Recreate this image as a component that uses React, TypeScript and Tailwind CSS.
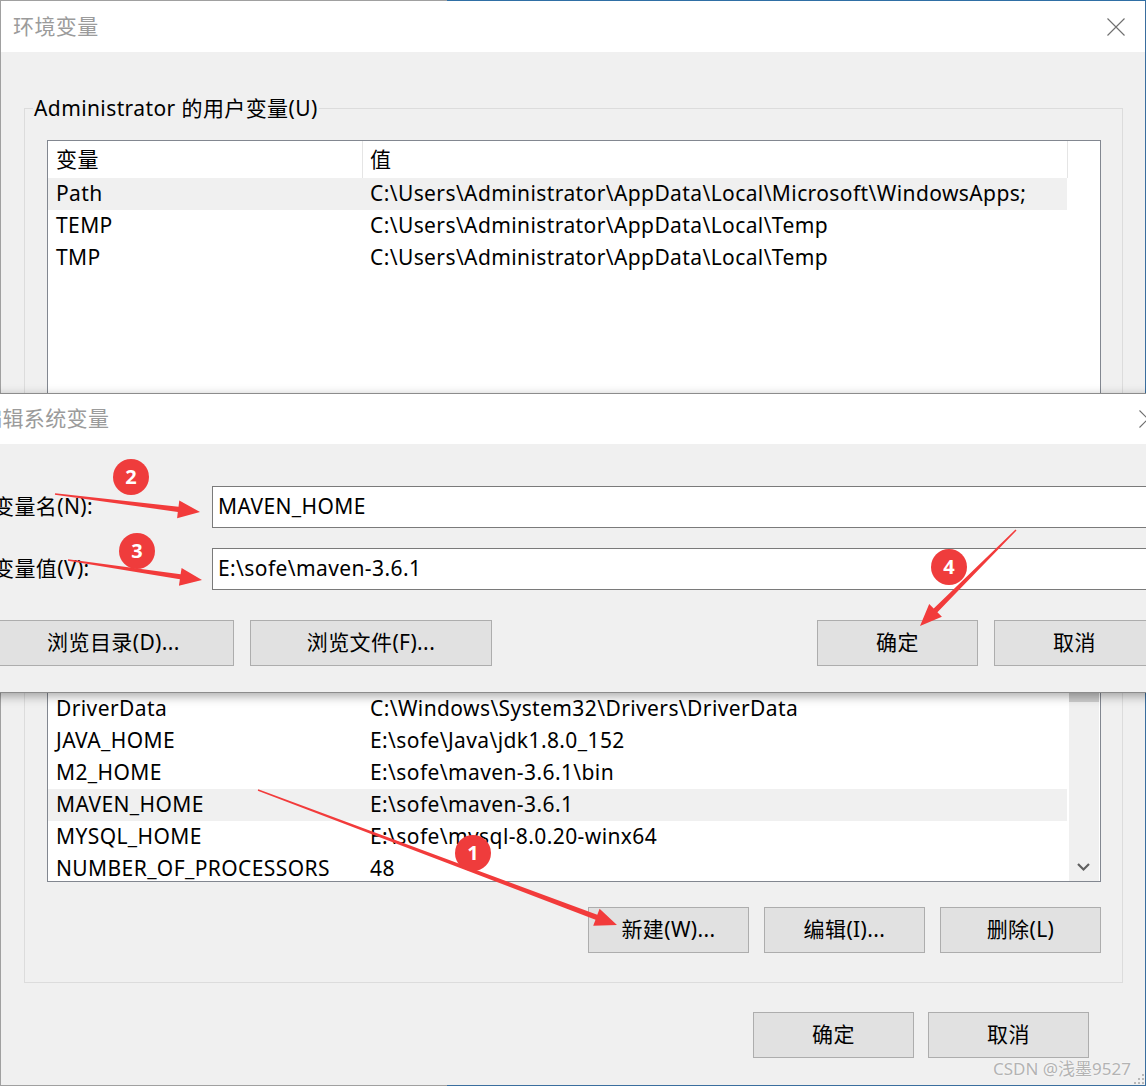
import React from 'react';

type Pt = [number, number];

const userVars: [string, string][] = [
  ['Path', 'C:\\Users\\Administrator\\AppData\\Local\\Microsoft\\WindowsApps;'],
  ['TEMP', 'C:\\Users\\Administrator\\AppData\\Local\\Temp'],
  ['TMP', 'C:\\Users\\Administrator\\AppData\\Local\\Temp'],
];

const sysVars: [string, string][] = [
  ['ComSpec', 'C:\\Windows\\system32\\cmd.exe'],
  ['DriverData', 'C:\\Windows\\System32\\Drivers\\DriverData'],
  ['JAVA_HOME', 'E:\\sofe\\Java\\jdk1.8.0_152'],
  ['M2_HOME', 'E:\\sofe\\maven-3.6.1\\bin'],
  ['MAVEN_HOME', 'E:\\sofe\\maven-3.6.1'],
  ['MYSQL_HOME', 'E:\\sofe\\mysql-8.0.20-winx64'],
  ['NUMBER_OF_PROCESSORS', '48'],
];

// tapered shaft + filled head, like the screenshot markup tool draws
function arrowPoints(from: Pt, to: Pt, head = 22, half = 9) {
  const [x1, y1] = from;
  const [x2, y2] = to;
  const len = Math.hypot(x2 - x1, y2 - y1);
  const ux = (x2 - x1) / len;
  const uy = (y2 - y1) / len;
  const nx = -uy;
  const ny = ux;
  const bx = x2 - ux * head;
  const by = y2 - uy * head;
  const pts: Pt[] = [
    [x1 + nx * 0.7, y1 + ny * 0.7],
    [bx + nx * 2.6, by + ny * 2.6],
    [bx + nx * half, by + ny * half],
    [x2, y2],
    [bx - nx * half, by - ny * half],
    [bx - nx * 2.6, by - ny * 2.6],
    [x1 - nx * 0.7, y1 - ny * 0.7],
  ];
  return pts.map((p) => p.map((v) => v.toFixed(1)).join(',')).join(' ');
}

const arrows: [Pt, Pt][] = [
  [[55, 494], [200, 512]],
  [[68, 560], [202, 580]],
  [[1016, 530], [920, 626]],
  [[258, 790], [617, 925]],
];

const CloseX = () => (
  <svg width="18" height="18" viewBox="0 0 18 18" className="shrink-0">
    <path d="M0.5 0.5 L17.5 17.5 M17.5 0.5 L0.5 17.5" stroke="#6f6f6f" strokeWidth="1.1" fill="none" />
  </svg>
);

const Button = ({label, className = 'w-[161px]'}: {label: string; className?: string}) => (
  <div className={`flex h-[46px] shrink-0 items-center justify-center border border-[#adadad] bg-[#e1e1e1] text-[21px] ${className}`}>
    {label}
  </div>
);

const Row = ({name, value, selected}: {name: string; value: string; selected?: boolean}) => (
  <div className={`flex h-[32px] w-[1019px] shrink-0 items-center whitespace-nowrap text-[21px] ${selected ? 'bg-[#f0f0f0]' : ''}`}>
    <span className="w-[315px] pl-[8px]">{name}</span>
    <span className="pl-[7px]">{value}</span>
  </div>
);

const Badge = ({n, className}: {n: string; className: string}) => (
  <div className={`absolute flex h-[36px] w-[36px] items-center justify-center rounded-full bg-[#ef3c3c] text-[20px] font-bold tracking-normal text-white ${className}`}>
    {n}
  </div>
);

export default function App() {
  return (
    <div className="relative h-[1086px] w-[1146px] overflow-hidden bg-white font-['Noto_Sans','Noto_Sans_CJK_SC',sans-serif] tracking-[0.4px] text-black">
      {/* 环境变量 window */}
      <div className="flex h-full flex-col border border-[#a0a0a0] border-r-[#3a6e9e] bg-[#f0f0f0]">
        <div className="flex h-[51px] shrink-0 items-center justify-between bg-white pl-[12px] pr-[20px]">
          <span className="text-[21px] text-[#9b9b9b]">环境变量</span>
          <CloseX />
        </div>

        <fieldset className="ml-[23px] mt-[42px] w-[1099px] border border-[#dcdcdc] pb-[29px] pl-[22px] pr-[21px] pt-[18px]">
          <legend className="-ml-[14px] px-[1px] text-[21px] leading-[28px]">Administrator 的用户变量(U)</legend>

          <div className="flex h-[300px] flex-col overflow-hidden border border-[#828790] bg-white">
            <div className="flex h-[37px] shrink-0 items-center text-[21px]">
              <span className="flex h-full w-[315px] items-center border-r border-[#e5e5e5] pl-[8px]">变量</span>
              <span className="flex h-full w-[705px] items-center border-r border-[#e5e5e5] pl-[7px]">值</span>
            </div>
            {userVars.map(([n, v], i) => (
              <Row key={n} name={n} value={v} selected={i === 0} />
            ))}
          </div>

          <div className="mt-[220px] flex h-[222px] overflow-hidden border border-[#828790] bg-white">
            <div className="flex w-[1019px] flex-col">
              {sysVars.map(([n, v]) => (
                <Row key={n} name={n} value={v} selected={n === 'MAVEN_HOME'} />
              ))}
            </div>
            <div className="ml-[2px] flex w-[30px] flex-col justify-between bg-[#f0f0f0]">
              <div className="mt-[8px] h-[33px] bg-[#cdcdcd]" />
              <svg width="30" height="20" viewBox="0 0 30 20" className="mb-[4px]">
                <path d="M9 7 L14.5 12.5 L20 7" stroke="#606060" strokeWidth="2.2" fill="none" />
              </svg>
            </div>
          </div>

          <div className="mt-[25px] flex justify-end gap-[15px]">
            <Button label="新建(W)..." />
            <Button label="编辑(I)..." />
            <Button label="删除(L)" />
          </div>
        </fieldset>

        <div className="mt-[29px] flex justify-end gap-[14px] pr-[56px]">
          <Button label="确定" />
          <Button label="取消" />
        </div>
      </div>
      <div className="absolute left-[447px] top-0 h-px w-[699px] bg-[#2f6fa5]" />
      <div className="absolute bottom-0 left-[447px] h-px w-[699px] bg-[#3a6e9e]" />

      {/* 编辑系统变量 dialog, pushed partly off-screen */}
      <div className="absolute left-[-31px] top-[393px] z-10 w-[1210px] border border-[#8c8c8c] bg-[#f0f0f0] shadow-[0_3px_10px_rgba(0,0,0,0.35)]">
        <div className="flex h-[50px] items-center justify-between bg-white pl-[11px] pr-[21px]">
          <span className="text-[21px] text-[#9b9b9b]">编辑系统变量</span>
          <CloseX />
        </div>
        <div className="flex flex-col gap-[20px] pb-[26px] pl-[23px] pr-[23px] pt-[42px]">
          <div className="flex items-center">
            <span className="w-[219px] shrink-0 text-[21px]">变量名(N):</span>
            <div className="flex h-[42px] flex-1 items-center border border-[#7a7a7a] bg-white pl-[5px] text-[21px]">MAVEN_HOME</div>
          </div>
          <div className="flex items-center">
            <span className="w-[219px] shrink-0 text-[21px]">变量值(V):</span>
            <div className="flex h-[42px] flex-1 items-center border border-[#7a7a7a] bg-white pl-[5px] text-[21px]">E:\sofe\maven-3.6.1</div>
          </div>
          <div className="mt-[10px] flex items-center justify-between">
            <div className="flex gap-[16px]">
              <Button label="浏览目录(D)..." className="w-[241px]" />
              <Button label="浏览文件(F)..." className="w-[242px]" />
            </div>
            <div className="flex gap-[16px]">
              <Button label="确定" />
              <Button label="取消" />
            </div>
          </div>
        </div>
      </div>

      {/* red markup */}
      <svg className="pointer-events-none absolute left-0 top-0 z-20" width="1146" height="1086">
        {arrows.map(([a, b], i) => (
          <polygon key={i} points={arrowPoints(a, b)} fill="#f23b3b" />
        ))}
      </svg>
      <Badge n="2" className="left-[113px] top-[459px] z-30" />
      <Badge n="3" className="left-[119px] top-[533px] z-30" />
      <Badge n="4" className="left-[931px] top-[549px] z-30" />
      <Badge n="1" className="left-[455px] top-[835px] z-30" />

      <div className="absolute bottom-[5px] right-[15px] z-30 text-[17px] tracking-normal text-[#b3b3b3] [text-shadow:0_0_2px_#fff]">
        CSDN @浅墨9527
      </div>
      <div className="absolute bottom-[2px] right-[2px] z-30 grid grid-cols-3 gap-[2px]">
        <span className="h-[2px] w-[2px]" />
        <span className="h-[2px] w-[2px]" />
        <span className="h-[2px] w-[2px] bg-[#b8b8b8]" />
        <span className="h-[2px] w-[2px]" />
        <span className="h-[2px] w-[2px] bg-[#b8b8b8]" />
        <span className="h-[2px] w-[2px] bg-[#b8b8b8]" />
        <span className="h-[2px] w-[2px] bg-[#b8b8b8]" />
        <span className="h-[2px] w-[2px] bg-[#b8b8b8]" />
        <span className="h-[2px] w-[2px] bg-[#b8b8b8]" />
      </div>
    </div>
  );
}
